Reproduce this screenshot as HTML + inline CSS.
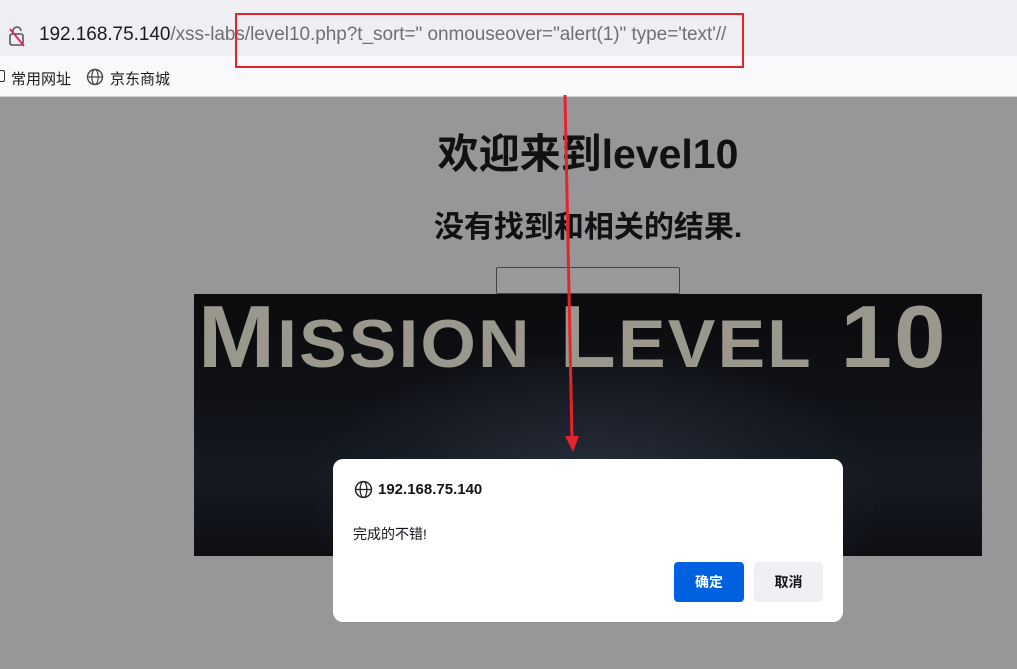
<!DOCTYPE html>
<html><head><meta charset="utf-8"><style>
body{margin:0;width:1017px;height:669px;overflow:hidden;position:relative;font-family:"Liberation Sans","Noto Sans CJK SC",sans-serif;background:#979799}
.a{position:absolute}
</style></head><body>
<div class="a" style="left:0;top:0;width:1017px;height:14px;background:#f0f0f4"></div>
<div class="a" style="left:0;top:14px;width:1017px;height:42px;background:#efeff3"></div>
<div class="a" style="left:0;top:56px;width:1017px;height:40px;background:#f9f9fb;border-bottom:1px solid #d0d0d4"></div>
<svg class="a" style="left:7px;top:24px" width="20" height="24" viewBox="0 0 20 24"><rect x="3" y="10" width="13" height="11" rx="2" fill="none" stroke="#555" stroke-width="1.6"/><path d="M6 10V7a4 4 0 0 1 8 0" fill="none" stroke="#555" stroke-width="1.6"/><path d="M3 5L17 22" stroke="#e0245e" stroke-width="1.8"/></svg>
<div class="a" style="left:39px;top:24px;font-size:19px;color:#1b1b1f;white-space:nowrap;letter-spacing:-0.05px">192.168.75.140<span style="color:#6f6f74">/xss-labs/level10.php?t_sort=" onmouseover="alert(1)" type='text'//</span></div>
<div class="a" style="left:235px;top:13px;width:505px;height:51px;border:2px solid #e3242b"></div>
<div class="a" style="left:-5px;top:70px;width:8px;height:10px;border:1.5px solid #333;border-radius:2px"></div>
<div class="a" style="left:11px;top:68px;font-size:15px;color:#1b1b1f">常用网址</div>
<svg class="a" style="left:86px;top:68px" width="18" height="18" viewBox="0 0 18 18"><circle cx="9" cy="9" r="7.5" fill="none" stroke="#444" stroke-width="1.4"/><ellipse cx="9" cy="9" rx="3.2" ry="7.5" fill="none" stroke="#444" stroke-width="1.2"/><path d="M1.5 9h15" stroke="#444" stroke-width="1.2"/></svg>
<div class="a" style="left:110px;top:68px;font-size:15px;color:#1b1b1f">京东商城</div>
<div class="a" style="left:0;top:120px;width:1176px;text-align:center;font-size:41px;font-weight:bold;color:#111">欢迎来到level10</div>
<div class="a" style="left:0;top:202px;width:1176px;text-align:center;font-size:30px;font-weight:bold;color:#111">没有找到和相关的结果.</div>
<div class="a" style="left:496px;top:267px;width:182px;height:25px;border:1px solid #444;border-radius:2px;background:#9a9a9c"></div>
<div class="a" style="left:194px;top:294px;width:788px;height:262px;background:linear-gradient(180deg,#0b0b0d 0%,#0f1116 40%,#151a22 70%,#0d0e12 100%);overflow:hidden">
<div class="a" style="left:120px;top:60px;width:560px;height:200px;background:radial-gradient(ellipse at 50% 70%,#2a3140 0%,#181c24 50%,transparent 75%)"></div>
<div class="a" style="left:4px;top:-8px;font-size:88px;font-weight:bold;color:#9a978c;letter-spacing:2px;white-space:nowrap;transform:scaleX(1.05);transform-origin:0 0">M<span style="font-size:68px">ISSION</span> L<span style="font-size:68px">EVEL</span> 10</div>
</div>
<svg class="a" style="left:0;top:0" width="1017" height="669"><path d="M565 95L572 440" stroke="#e3242b" stroke-width="3"/><path d="M565 436L573 452L579 436Z" fill="#e3242b"/></svg>
<div class="a" style="left:333px;top:459px;width:510px;height:163px;background:#fff;border-radius:10px"></div>
<svg class="a" style="left:354px;top:480px" width="19" height="19" viewBox="0 0 18 18"><circle cx="9" cy="9" r="7.5" fill="none" stroke="#222" stroke-width="1.4"/><ellipse cx="9" cy="9" rx="3.2" ry="7.5" fill="none" stroke="#222" stroke-width="1.2"/><path d="M1.5 9h15" stroke="#222" stroke-width="1.2"/></svg>
<div class="a" style="left:378px;top:481px;font-size:15px;font-weight:bold;color:#15141a">192.168.75.140</div>
<div class="a" style="left:353px;top:524px;font-size:14px;color:#15141a">完成的不错!</div>
<div class="a" style="left:674px;top:562px;width:70px;height:40px;background:#0061e0;border-radius:4px;color:#fff;font-size:14px;font-weight:bold;line-height:40px;text-align:center">确定</div>
<div class="a" style="left:754px;top:562px;width:69px;height:40px;background:#f0f0f4;border-radius:4px;color:#15141a;font-size:14px;font-weight:bold;line-height:40px;text-align:center">取消</div>
</body></html>
